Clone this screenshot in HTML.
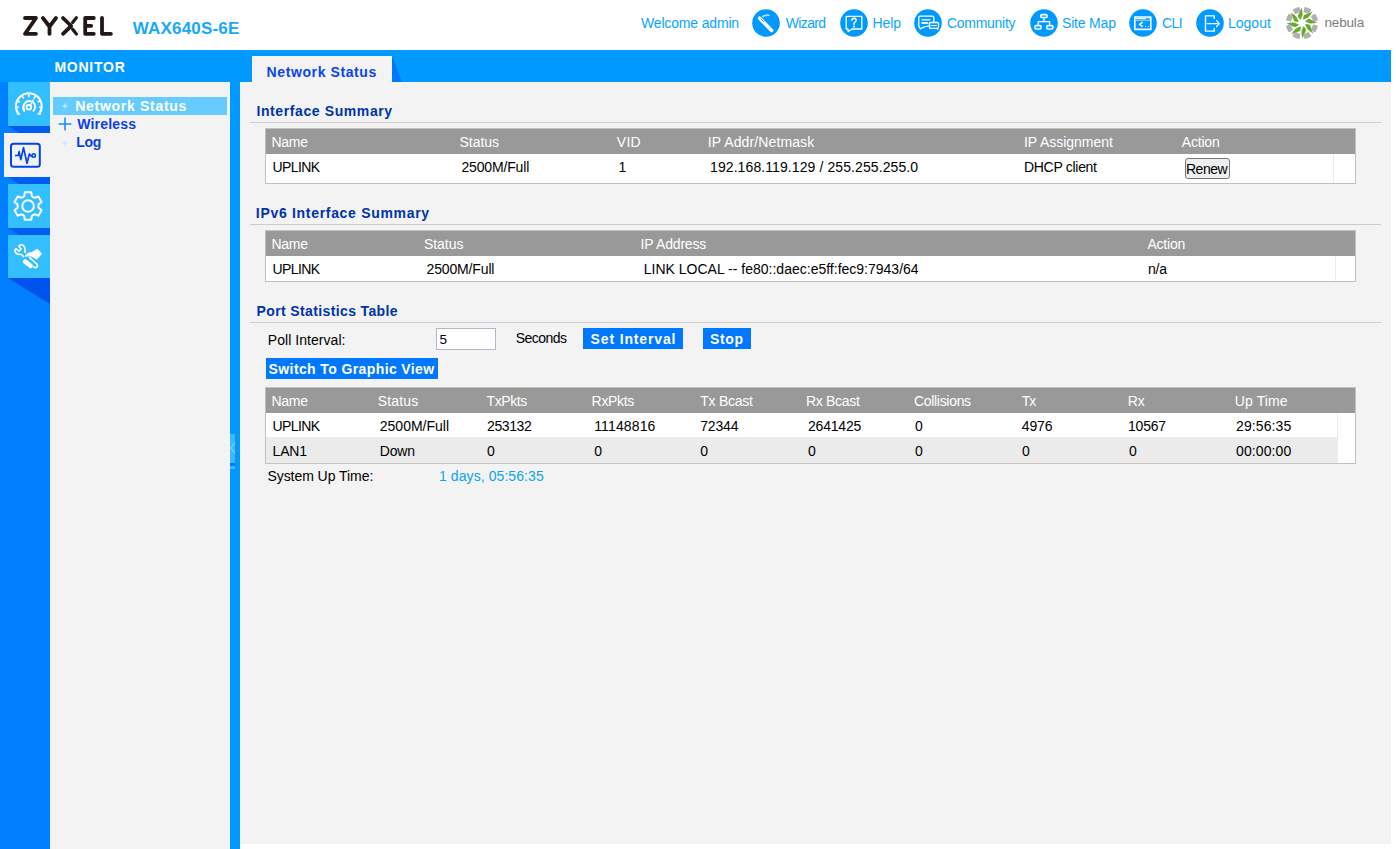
<!DOCTYPE html>
<html><head><meta charset="utf-8"><style>
html,body{margin:0;padding:0;}
body{width:1396px;height:849px;overflow:hidden;position:relative;background:#fff;font-family:"Liberation Sans", sans-serif;}
</style></head><body>
<svg style="position:absolute;left:20px;top:12px" width="96" height="28" viewBox="20 12 96 28" fill="none" stroke="#231815" stroke-width="3.8" stroke-linecap="round" stroke-linejoin="round">
<path d="M25,18 H36 L25,33.8 H36"/>
<path d="M42.9,18 L49.5,26.5 L56,18 M49.5,26.5 V33.8"/>
<path d="M63,18 L71.2,26 L63,33.8"/>
<path d="M76.4,17.8 L72.6,22.6 M72.6,29.2 L76.4,34" stroke-width="3.2"/>
<path d="M93.8,18 H85.2 V33.8 H93.8 M85.2,25.8 H91.2"/>
<path d="M102,18 V33.8 H110.9"/>
</svg>
<div id="t0" style="position:absolute;left:132.80px;top:18.51px;line-height:20px;font-size:17px;font-weight:700;color:#17a8f8;letter-spacing:0.178px;white-space:pre;">WAX640S-6E</div>
<div id="t1" style="position:absolute;left:641.00px;top:13.05px;line-height:20px;font-size:14px;font-weight:400;color:#0aa5fb;letter-spacing:-0.167px;white-space:pre;">Welcome admin</div>
<div id="t2" style="position:absolute;left:785.80px;top:13.05px;line-height:20px;font-size:14px;font-weight:400;color:#0aa5fb;letter-spacing:-0.660px;white-space:pre;">Wizard</div>
<div id="t3" style="position:absolute;left:872.40px;top:13.05px;line-height:20px;font-size:14px;font-weight:400;color:#0aa5fb;letter-spacing:-0.067px;white-space:pre;">Help</div>
<div id="t4" style="position:absolute;left:947.00px;top:13.05px;line-height:20px;font-size:14px;font-weight:400;color:#0aa5fb;letter-spacing:-0.287px;white-space:pre;">Community</div>
<div id="t5" style="position:absolute;left:1062.00px;top:13.05px;line-height:20px;font-size:14px;font-weight:400;color:#0aa5fb;letter-spacing:-0.186px;white-space:pre;">Site Map</div>
<div id="t6" style="position:absolute;left:1162.00px;top:13.05px;line-height:20px;font-size:14px;font-weight:400;color:#0aa5fb;letter-spacing:-0.600px;white-space:pre;">CLI</div>
<div id="t7" style="position:absolute;left:1228.00px;top:13.05px;line-height:20px;font-size:14px;font-weight:400;color:#0aa5fb;letter-spacing:0.000px;white-space:pre;">Logout</div>
<div id="t8" style="position:absolute;left:1324.40px;top:12.82px;line-height:20px;font-size:13.5px;font-weight:400;color:#7d7d7d;letter-spacing:-0.140px;white-space:pre;">nebula</div>
<svg style="position:absolute;left:751.6px;top:8.8px" width="28" height="28" viewBox="-14 -14 28 28"><circle cx="0" cy="0" r="13.8" fill="#0099ff"/><g fill="none" stroke="#fff" stroke-width="1.3" stroke-linecap="round" stroke-linejoin="round"><path d="M-6.4,-4.8 L5.6,7.4" stroke-width="3.6"/><path d="M-5.2,-4.2 L-2.6,-1.6" stroke="#0099ff" stroke-width="1"/><path d="M-3.3,-6.5 Q-1,-8.8 3.2,-7.7" stroke-width="1.1"/><path d="M-2.6,-5.6 Q-0.8,-7.4 1.6,-7.3" stroke-width="0.6" stroke-opacity="0.6"/></g></svg>
<svg style="position:absolute;left:840px;top:8.8px" width="28" height="28" viewBox="-14 -14 28 28"><circle cx="0" cy="0" r="13.8" fill="#0099ff"/><g fill="none" stroke="#fff" stroke-width="1.3" stroke-linecap="round" stroke-linejoin="round"><path d="M-7.8,-6.6 H7.8 V6 H-2 L-5.8,8.6 L-6,6 H-7.8 Z"/><path d="M-2.2,-2.6 Q-2,-4.8 0,-4.8 Q2.2,-4.8 2.2,-2.8 Q2.2,-1.4 0.6,-0.6 Q0,-0.2 0,1.4" stroke-width="1.4"/><circle cx="0" cy="3.6" r="0.5" fill="#fff" stroke-width="1.2"/></g></svg>
<svg style="position:absolute;left:914px;top:8.8px" width="28" height="28" viewBox="-14 -14 28 28"><circle cx="0" cy="0" r="13.8" fill="#0099ff"/><g fill="none" stroke="#fff" stroke-width="1.3" stroke-linecap="round" stroke-linejoin="round"><path d="M1.4,3.2 Q-2.5,2.8 -5.2,4.6 L-7.6,6 L-8.2,4.6 Q-9.2,4 -9.2,3 V-5.6 Q-9.2,-6.8 -8,-6.8 H4.6 Q5.8,-6.8 5.8,-5.6 V-0.6" stroke-width="1.3"/><path d="M-6,-3.2 H1.8" stroke-width="1.3"/><path d="M-6,0 H-0.4" stroke-width="1.8" stroke-opacity="0.85"/><rect x="1.5" y="-0.5" width="9" height="5.8" rx="1.1" stroke-width="1.3"/><path d="M9,5.3 L9.8,6.3" stroke-width="1.1"/><path d="M3.2,2.6 H8.4" stroke-width="1" stroke-dasharray="1.4 0.5"/></g></svg>
<svg style="position:absolute;left:1030px;top:8.8px" width="28" height="28" viewBox="-14 -14 28 28"><circle cx="0" cy="0" r="13.8" fill="#0099ff"/><g fill="none" stroke="#fff" stroke-width="1.3" stroke-linecap="round" stroke-linejoin="round"><g stroke-width="1.6"><rect x="-3.2" y="-8.4" width="6.2" height="2.9" rx="1"/><rect x="-9" y="2.6" width="6" height="3.4" rx="1"/><rect x="2.8" y="2.6" width="6" height="3.4" rx="1"/></g><path d="M-0.1,-4.8 V-1.4 M-5.8,1.8 V-1.4 H5.6 V1.8" stroke-width="1.3"/></g></svg>
<svg style="position:absolute;left:1129px;top:8.8px" width="28" height="28" viewBox="-14 -14 28 28"><circle cx="0" cy="0" r="13.8" fill="#0099ff"/><g fill="none" stroke="#fff" stroke-width="1.3" stroke-linecap="round" stroke-linejoin="round"><rect x="-8.2" y="-6" width="16" height="12.4" stroke-width="1.6"/><path d="M-6.6,-4.4 H2.8" stroke-width="1.2"/><path d="M5.2,-4.4 H6.4" stroke-width="1.2" stroke-opacity="0.6"/><path d="M-6.6,-2.6 H6.6" stroke-width="0.8" stroke-opacity="0.7"/><path d="M-0.6,-0.6 L-3.6,1.4 L-0.6,3.4" stroke-width="1.3"/><circle cx="2.6" cy="3.4" r="0.6" fill="#fff" stroke="none"/><circle cx="5.4" cy="3.4" r="0.6" fill="#fff" stroke="none"/></g></svg>
<svg style="position:absolute;left:1196px;top:8.8px" width="28" height="28" viewBox="-14 -14 28 28"><circle cx="0" cy="0" r="13.8" fill="#0099ff"/><g fill="none" stroke="#fff" stroke-width="1.3" stroke-linecap="round" stroke-linejoin="round"><path d="M4.3,-4.6 V-7.1 H-4.5 V8.1 H4.3 V5.4" stroke-width="1.4"/><path d="M-2.6,0.6 H9.4 M6.6,-2.3 L9.5,0.6 L6.6,3.5" stroke-width="1.2"/></g></svg>
<svg style="position:absolute;left:1285px;top:5.800000000000001px" width="34" height="34" viewBox="-17 -17 34 34"><g><g transform="rotate(0)"><path d="M-1.5,-3.0 Q-4.0,-5.6 -4.2,-7.0 L-0.45,-15.4 Q0.8,-11 0.5,-7.8 Z" fill="#68ab2a"/></g><g transform="rotate(45)"><path d="M-1.5,-3.0 Q-4.0,-5.6 -4.2,-7.0 L-0.45,-15.4 Q0.8,-11 0.5,-7.8 Z" fill="#68ab2a"/></g><g transform="rotate(90)"><path d="M-1.5,-3.0 Q-4.0,-5.6 -4.2,-7.0 L-0.45,-15.4 Q0.8,-11 0.5,-7.8 Z" fill="#68ab2a"/></g><g transform="rotate(135)"><path d="M-1.5,-3.0 Q-4.0,-5.6 -4.2,-7.0 L-0.45,-15.4 Q0.8,-11 0.5,-7.8 Z" fill="#68ab2a"/></g><g transform="rotate(180)"><path d="M-1.5,-3.0 Q-4.0,-5.6 -4.2,-7.0 L-0.45,-15.4 Q0.8,-11 0.5,-7.8 Z" fill="#68ab2a"/></g><g transform="rotate(225)"><path d="M-1.5,-3.0 Q-4.0,-5.6 -4.2,-7.0 L-0.45,-15.4 Q0.8,-11 0.5,-7.8 Z" fill="#68ab2a"/></g><g transform="rotate(270)"><path d="M-1.5,-3.0 Q-4.0,-5.6 -4.2,-7.0 L-0.45,-15.4 Q0.8,-11 0.5,-7.8 Z" fill="#68ab2a"/></g><g transform="rotate(315)"><path d="M-1.5,-3.0 Q-4.0,-5.6 -4.2,-7.0 L-0.45,-15.4 Q0.8,-11 0.5,-7.8 Z" fill="#68ab2a"/></g><path d="M2.21,-11.39 L2.98,-15.31 A15.6,15.6 0 0 1 8.72,-12.93 L6.49,-9.62 A11.6,11.6 0 0 0 2.21,-11.39 Z" fill="#b0b0b2" stroke="#b0b0b2" stroke-width="1.2" stroke-linejoin="round"/><path d="M9.62,-6.49 L12.93,-8.72 A15.6,15.6 0 0 1 15.31,-2.98 L11.39,-2.21 A11.6,11.6 0 0 0 9.62,-6.49 Z" fill="#b0b0b2" stroke="#b0b0b2" stroke-width="1.2" stroke-linejoin="round"/><path d="M11.39,2.21 L15.31,2.98 A15.6,15.6 0 0 1 12.93,8.72 L9.62,6.49 A11.6,11.6 0 0 0 11.39,2.21 Z" fill="#b0b0b2" stroke="#b0b0b2" stroke-width="1.2" stroke-linejoin="round"/><path d="M6.49,9.62 L8.72,12.93 A15.6,15.6 0 0 1 2.98,15.31 L2.21,11.39 A11.6,11.6 0 0 0 6.49,9.62 Z" fill="#b0b0b2" stroke="#b0b0b2" stroke-width="1.2" stroke-linejoin="round"/><path d="M-2.21,11.39 L-2.98,15.31 A15.6,15.6 0 0 1 -8.72,12.93 L-6.49,9.62 A11.6,11.6 0 0 0 -2.21,11.39 Z" fill="#b0b0b2" stroke="#b0b0b2" stroke-width="1.2" stroke-linejoin="round"/><path d="M-9.62,6.49 L-12.93,8.72 A15.6,15.6 0 0 1 -15.31,2.98 L-11.39,2.21 A11.6,11.6 0 0 0 -9.62,6.49 Z" fill="#b0b0b2" stroke="#b0b0b2" stroke-width="1.2" stroke-linejoin="round"/><path d="M-11.39,-2.21 L-15.31,-2.98 A15.6,15.6 0 0 1 -12.93,-8.72 L-9.62,-6.49 A11.6,11.6 0 0 0 -11.39,-2.21 Z" fill="#b0b0b2" stroke="#b0b0b2" stroke-width="1.2" stroke-linejoin="round"/><path d="M-6.49,-9.62 L-8.72,-12.93 A15.6,15.6 0 0 1 -2.98,-15.31 L-2.21,-11.39 A11.6,11.6 0 0 0 -6.49,-9.62 Z" fill="#b0b0b2" stroke="#b0b0b2" stroke-width="1.2" stroke-linejoin="round"/></g></svg>
<div style="position:absolute;left:0px;top:50px;width:1391px;height:32px;background:#0099ff;"></div>
<div id="t9" style="position:absolute;left:54.40px;top:57.15px;line-height:20px;font-size:14px;font-weight:700;color:#fff;letter-spacing:0.767px;white-space:pre;">MONITOR</div>
<div style="position:absolute;left:252px;top:56px;width:140px;height:26px;background:#f3f3f3;"></div>
<svg style="position:absolute;left:392px;top:56px" width="10" height="26"><path d="M0,0 L10,26 L0,26 Z" fill="#0077ff"/></svg>
<div id="t10" style="position:absolute;left:266.60px;top:61.95px;line-height:20px;font-size:14px;font-weight:700;color:#0a45ee;letter-spacing:0.600px;white-space:pre;">Network Status</div>
<div style="position:absolute;left:0px;top:82px;width:50px;height:767px;background:#0080ff;"></div>
<div style="position:absolute;left:8px;top:82px;width:42px;height:44px;background:#33bfff;"></div>
<svg style="position:absolute;left:8px;top:126px" width="42" height="7"><path d="M0,0 H42 V7 H11 Z" fill="#005cf0"/></svg>
<div style="position:absolute;left:4px;top:133px;width:46px;height:44px;background:#f3f3f3;"></div>
<svg style="position:absolute;left:8px;top:177px" width="42" height="7"><path d="M0,0 H42 V7 H11 Z" fill="#005cf0"/></svg>
<div style="position:absolute;left:8px;top:184px;width:42px;height:44px;background:#33bfff;"></div>
<svg style="position:absolute;left:8px;top:228px" width="42" height="7"><path d="M0,0 H42 V7 H11 Z" fill="#005cf0"/></svg>
<div style="position:absolute;left:8px;top:235px;width:42px;height:43px;background:#33bfff;"></div>
<svg style="position:absolute;left:8px;top:278px" width="42" height="26"><path d="M0,0 H42 V26 Z" fill="#0052ee"/></svg>
<svg style="position:absolute;left:8px;top:86px" width="42" height="36" viewBox="8 86 42 36" fill="none" stroke="#fff" stroke-linecap="round" stroke-width="2">
<path d="M18.3,113.6 A12.9,12.9 0 1 1 39.4,113.6"/><path d="M17.6,113.9 H19.4 M40.1,113.9 H38.3" stroke-width="1.8"/>
<path d="M28.85,95 V96.6 M22.6,96.7 L23.4,98 M35.1,96.7 L34.3,98 M18,101 L19.4,101.8 M39.7,101 L38.3,101.8 M16.4,107.2 H18 M41.3,107.2 H39.7" stroke-width="1.6"/>
<path d="M24.2,110.8 A6.4,6.4 0 0 1 30.5,101.1 M33.5,102.6 A6.4,6.4 0 0 1 33.5,110.8" stroke-width="2"/>
<circle cx="28.85" cy="107.3" r="2.3" stroke-width="1.9"/>
<path d="M30.2,105.2 L33.2,100" stroke-width="1.5"/>
</svg>
<svg style="position:absolute;left:6px;top:138px" width="40" height="34" viewBox="6 138 40 34" fill="none" stroke="#0044ee" stroke-linecap="round" stroke-linejoin="round">
<rect x="11" y="143.8" width="28.8" height="23" rx="2.6" stroke-width="2"/>
<path d="M15.6,155.5 H18.3 L19.1,151.6 L20.8,159.6 L23.5,147.6 L27,163.2 L29.4,153.9 L31.2,156.2" stroke-width="1.7"/>
<circle cx="33.7" cy="155.5" r="1.7" stroke-width="1.6"/>
</svg>
<svg style="position:absolute;left:8px;top:186px" width="40" height="40" viewBox="8 186 40 40" fill="none" stroke="#fff" stroke-width="2" stroke-linejoin="round">
<path d="M22.90,197.13 L24.25,196.15 L24.88,192.31 L31.22,192.31 L31.85,196.15 L33.20,197.13 L34.72,197.81 L38.36,196.43 L41.53,201.93 L38.52,204.39 L38.35,206.05 L38.52,207.71 L41.53,210.17 L38.36,215.67 L34.72,214.29 L33.20,214.97 L31.85,215.95 L31.22,219.79 L24.88,219.79 L24.25,215.95 L22.90,214.97 L21.38,214.29 L17.74,215.67 L14.57,210.17 L17.58,207.71 L17.75,206.05 L17.58,204.39 L14.57,201.93 L17.74,196.43 L21.38,197.81 Z"/>
<circle cx="28.05" cy="206.05" r="5.8"/>
</svg>
<svg style="position:absolute;left:8px;top:237px" width="40" height="40" viewBox="8 237 40 40" fill="none" stroke="#fff" stroke-linecap="round" stroke-linejoin="round">
<path d="M25,252.4 Q25.4,246 22.4,245 Q19.8,244.2 18.8,246.3 L21.1,249 L18.9,251.1 L15.9,248.6 Q14.3,250.2 15.3,252.2 Q17,254.8 21.6,254.4 L23.4,256.6" stroke-width="1.6"/>
<path d="M25.6,255.4 Q26.6,252.8 31.6,252.6 L37.4,249.2 L41.6,253.7 L36.8,259.1 L31.8,256.2 Q28.5,255.2 25.6,256.2 Z" fill="#fff" stroke-width="1"/>
<path d="M25.2,261.6 L30.6,265.8" stroke-width="4.6"/>
<path d="M27.6,259.6 L31.6,262.8 M26,261.6 L30,264.8" stroke="#33bfff" stroke-width="0" />
<path d="M29.4,257.4 L37,264.2 Q38.2,266.6 36,267.6 Q34.6,268 33.8,266.8" stroke-width="1.6"/>
</svg>
<div style="position:absolute;left:50px;top:82px;width:180px;height:767px;background:#f3f3f3;"></div>
<div style="position:absolute;left:53px;top:97px;width:174px;height:18px;background:#66ccff;"></div>
<div id="t11" style="position:absolute;left:75.20px;top:95.95px;line-height:20px;font-size:14px;font-weight:700;color:#fff;letter-spacing:0.715px;white-space:pre;">Network Status</div>
<svg style="position:absolute;left:60px;top:101.3px" width="10" height="10"><path d="M2.6,5 H7.4 M5,2.6 V7.4" stroke="#d8f2ff" stroke-width="1"/></svg>
<svg style="position:absolute;left:57px;top:116px" width="16" height="16"><path d="M1.6,8 H14.4 M8,1.6 V14.4" stroke="#1a8cff" stroke-width="1.6"/></svg>
<div id="t12" style="position:absolute;left:77.20px;top:113.95px;line-height:20px;font-size:14px;font-weight:700;color:#0a3fe6;letter-spacing:0.200px;white-space:pre;">Wireless</div>
<svg style="position:absolute;left:60px;top:137.5px" width="10" height="10"><path d="M2.6,5 H7.4 M5,2.6 V7.4" stroke="#c8e0ff" stroke-width="1"/></svg>
<div id="t13" style="position:absolute;left:76.20px;top:131.75px;line-height:20px;font-size:14px;font-weight:700;color:#0a3fe6;letter-spacing:-0.300px;white-space:pre;">Log</div>
<div style="position:absolute;left:230px;top:82px;width:10px;height:767px;background:#0099ff;"></div>
<div style="position:absolute;left:230px;top:434px;width:5px;height:29px;background:#3db8ff;"></div>
<div style="position:absolute;left:230px;top:463px;width:5px;height:3px;background:#0077ff;"></div>
<div style="position:absolute;left:230px;top:466px;width:5px;height:3px;background:#3db8ff;"></div>
<svg style="position:absolute;left:230px;top:441px" width="6" height="14"><path d="M5,1.8 L0.6,7 L5,12.2" fill="none" stroke="#a8dcff" stroke-width="0.9"/></svg>
<div style="position:absolute;left:240px;top:82px;width:1151px;height:762px;background:#f3f3f3;"></div>
<div id="t14" style="position:absolute;left:256.40px;top:101.05px;line-height:20px;font-size:14px;font-weight:700;color:#0033aa;letter-spacing:0.606px;white-space:pre;">Interface Summary</div>
<div style="position:absolute;left:250px;top:122px;width:1131px;height:1px;background:#cccccc;"></div>
<div id="t15" style="position:absolute;left:255.80px;top:203.35px;line-height:20px;font-size:14px;font-weight:700;color:#0033aa;letter-spacing:0.695px;white-space:pre;">IPv6 Interface Summary</div>
<div style="position:absolute;left:250px;top:224px;width:1131px;height:1px;background:#cccccc;"></div>
<div id="t16" style="position:absolute;left:256.60px;top:301.25px;line-height:20px;font-size:14px;font-weight:700;color:#0033aa;letter-spacing:0.370px;white-space:pre;">Port Statistics Table</div>
<div style="position:absolute;left:250px;top:322px;width:1131px;height:1px;background:#cccccc;"></div>
<div style="position:absolute;left:265px;top:128px;width:1089px;height:54px;border:1px solid #c4c2b8;background:#fff"></div>
<div style="position:absolute;left:266px;top:129px;width:1089px;height:25px;background:#999999;"></div>
<div style="position:absolute;left:1333px;top:154px;width:1px;height:29px;background:#ececec;"></div>
<div id="t17" style="position:absolute;left:271.40px;top:132.45px;line-height:20px;font-size:14px;font-weight:400;color:#fff;letter-spacing:-0.267px;white-space:pre;">Name</div>
<div id="t18" style="position:absolute;left:459.60px;top:132.45px;line-height:20px;font-size:14px;font-weight:400;color:#fff;letter-spacing:-0.060px;white-space:pre;">Status</div>
<div id="t19" style="position:absolute;left:616.80px;top:132.45px;line-height:20px;font-size:14px;font-weight:400;color:#fff;letter-spacing:0.250px;white-space:pre;">VID</div>
<div id="t20" style="position:absolute;left:707.80px;top:132.45px;line-height:20px;font-size:14px;font-weight:400;color:#fff;letter-spacing:0.114px;white-space:pre;">IP Addr/Netmask</div>
<div id="t21" style="position:absolute;left:1024.00px;top:132.45px;line-height:20px;font-size:14px;font-weight:400;color:#fff;letter-spacing:-0.033px;white-space:pre;">IP Assignment</div>
<div id="t22" style="position:absolute;left:1181.80px;top:132.45px;line-height:20px;font-size:14px;font-weight:400;color:#fff;letter-spacing:-0.200px;white-space:pre;">Action</div>
<div id="t23" style="position:absolute;left:272.60px;top:157.15px;line-height:20px;font-size:14px;font-weight:400;color:#000;letter-spacing:-0.640px;white-space:pre;">UPLINK</div>
<div id="t24" style="position:absolute;left:461.40px;top:157.15px;line-height:20px;font-size:14px;font-weight:400;color:#000;letter-spacing:-0.156px;white-space:pre;">2500M/Full</div>
<div id="t25" style="position:absolute;left:618.60px;top:157.15px;line-height:20px;font-size:14px;font-weight:400;color:#000;letter-spacing:-0.200px;white-space:pre;">1</div>
<div id="t26" style="position:absolute;left:710.00px;top:157.15px;line-height:20px;font-size:14px;font-weight:400;color:#000;letter-spacing:0.093px;white-space:pre;">192.168.119.129 / 255.255.255.0</div>
<div id="t27" style="position:absolute;left:1024.00px;top:157.15px;line-height:20px;font-size:14px;font-weight:400;color:#000;letter-spacing:-0.300px;white-space:pre;">DHCP client</div>
<div style="position:absolute;left:1185px;top:158px;width:43px;height:19px;border:1px solid #767676;border-radius:3px;background:#efefef"></div>
<div id="t28" style="position:absolute;left:1186.00px;top:159.25px;line-height:20px;font-size:14px;font-weight:400;color:#000;letter-spacing:-0.500px;white-space:pre;">Renew</div>
<div style="position:absolute;left:265px;top:230px;width:1089px;height:50px;border:1px solid #c4c2b8;background:#fff"></div>
<div style="position:absolute;left:266px;top:231px;width:1089px;height:25px;background:#999999;"></div>
<div style="position:absolute;left:1335px;top:256px;width:1px;height:25px;background:#ececec;"></div>
<div id="t29" style="position:absolute;left:271.40px;top:234.35px;line-height:20px;font-size:14px;font-weight:400;color:#fff;letter-spacing:-0.267px;white-space:pre;">Name</div>
<div id="t30" style="position:absolute;left:424.00px;top:234.35px;line-height:20px;font-size:14px;font-weight:400;color:#fff;letter-spacing:-0.060px;white-space:pre;">Status</div>
<div id="t31" style="position:absolute;left:640.60px;top:234.35px;line-height:20px;font-size:14px;font-weight:400;color:#fff;letter-spacing:-0.200px;white-space:pre;">IP Address</div>
<div id="t32" style="position:absolute;left:1147.40px;top:234.35px;line-height:20px;font-size:14px;font-weight:400;color:#fff;letter-spacing:-0.200px;white-space:pre;">Action</div>
<div id="t33" style="position:absolute;left:272.60px;top:259.15px;line-height:20px;font-size:14px;font-weight:400;color:#000;letter-spacing:-0.640px;white-space:pre;">UPLINK</div>
<div id="t34" style="position:absolute;left:426.60px;top:259.15px;line-height:20px;font-size:14px;font-weight:400;color:#000;letter-spacing:-0.156px;white-space:pre;">2500M/Full</div>
<div id="t35" style="position:absolute;left:643.80px;top:259.15px;line-height:20px;font-size:14px;font-weight:400;color:#000;letter-spacing:0.002px;white-space:pre;">LINK LOCAL -- fe80::daec:e5ff:fec9:7943/64</div>
<div id="t36" style="position:absolute;left:1148.00px;top:259.15px;line-height:20px;font-size:14px;font-weight:400;color:#000;letter-spacing:-0.200px;white-space:pre;">n/a</div>
<div id="t37" style="position:absolute;left:267.80px;top:330.25px;line-height:20px;font-size:14px;font-weight:400;color:#000;letter-spacing:0.046px;white-space:pre;">Poll Interval:</div>
<div style="position:absolute;left:436px;top:328px;width:58px;height:20px;border:1px solid #b5b5c8;background:#fff"></div>
<div id="t38" style="position:absolute;left:439.40px;top:330.12px;line-height:20px;font-size:13.5px;font-weight:400;color:#000;letter-spacing:0.000px;white-space:pre;">5</div>
<div id="t39" style="position:absolute;left:515.80px;top:327.85px;line-height:20px;font-size:14px;font-weight:400;color:#000;letter-spacing:-0.567px;white-space:pre;">Seconds</div>
<div style="position:absolute;left:583px;top:328px;width:100px;height:21px;background:#0077ff;"></div>
<div id="t40" style="position:absolute;left:590.60px;top:328.95px;line-height:20px;font-size:14px;font-weight:700;color:#fff;letter-spacing:0.855px;white-space:pre;">Set Interval</div>
<div style="position:absolute;left:703px;top:328px;width:48px;height:21px;background:#0077ff;"></div>
<div id="t41" style="position:absolute;left:710.00px;top:328.95px;line-height:20px;font-size:14px;font-weight:700;color:#fff;letter-spacing:0.667px;white-space:pre;">Stop</div>
<div style="position:absolute;left:266px;top:358px;width:172px;height:21px;background:#0077ff;"></div>
<div id="t42" style="position:absolute;left:268.60px;top:358.95px;line-height:20px;font-size:14px;font-weight:700;color:#fff;letter-spacing:0.390px;white-space:pre;">Switch To Graphic View</div>
<div style="position:absolute;left:265px;top:387px;width:1089px;height:75px;border:1px solid #c4c2b8;background:#fff"></div>
<div style="position:absolute;left:266px;top:388px;width:1089px;height:25px;background:#999999;"></div>
<div style="position:absolute;left:266px;top:437px;width:1071px;height:26px;background:#ebebeb;"></div>
<div style="position:absolute;left:1337px;top:413px;width:1px;height:50px;background:#ececec;"></div>
<div id="t43" style="position:absolute;left:271.40px;top:391.45px;line-height:20px;font-size:14px;font-weight:400;color:#fff;letter-spacing:-0.267px;white-space:pre;">Name</div>
<div id="t44" style="position:absolute;left:377.80px;top:391.45px;line-height:20px;font-size:14px;font-weight:400;color:#fff;letter-spacing:0.140px;white-space:pre;">Status</div>
<div id="t45" style="position:absolute;left:486.60px;top:391.45px;line-height:20px;font-size:14px;font-weight:400;color:#fff;letter-spacing:-0.420px;white-space:pre;">TxPkts</div>
<div id="t46" style="position:absolute;left:591.60px;top:391.45px;line-height:20px;font-size:14px;font-weight:400;color:#fff;letter-spacing:-0.320px;white-space:pre;">RxPkts</div>
<div id="t47" style="position:absolute;left:700.20px;top:391.45px;line-height:20px;font-size:14px;font-weight:400;color:#fff;letter-spacing:-0.243px;white-space:pre;">Tx Bcast</div>
<div id="t48" style="position:absolute;left:806.00px;top:391.45px;line-height:20px;font-size:14px;font-weight:400;color:#fff;letter-spacing:-0.314px;white-space:pre;">Rx Bcast</div>
<div id="t49" style="position:absolute;left:914.00px;top:391.45px;line-height:20px;font-size:14px;font-weight:400;color:#fff;letter-spacing:-0.311px;white-space:pre;">Collisions</div>
<div id="t50" style="position:absolute;left:1021.80px;top:391.45px;line-height:20px;font-size:14px;font-weight:400;color:#fff;letter-spacing:-1.000px;white-space:pre;">Tx</div>
<div id="t51" style="position:absolute;left:1127.80px;top:391.45px;line-height:20px;font-size:14px;font-weight:400;color:#fff;letter-spacing:-0.200px;white-space:pre;">Rx</div>
<div id="t52" style="position:absolute;left:1234.80px;top:391.45px;line-height:20px;font-size:14px;font-weight:400;color:#fff;letter-spacing:0.100px;white-space:pre;">Up Time</div>
<div id="t53" style="position:absolute;left:272.60px;top:416.35px;line-height:20px;font-size:14px;font-weight:400;color:#000;letter-spacing:-0.640px;white-space:pre;">UPLINK</div>
<div id="t54" style="position:absolute;left:379.80px;top:416.35px;line-height:20px;font-size:14px;font-weight:400;color:#000;letter-spacing:-0.000px;white-space:pre;">2500M/Full</div>
<div id="t55" style="position:absolute;left:487.00px;top:416.35px;line-height:20px;font-size:14px;font-weight:400;color:#000;letter-spacing:-0.380px;white-space:pre;">253132</div>
<div id="t56" style="position:absolute;left:594.20px;top:416.35px;line-height:20px;font-size:14px;font-weight:400;color:#000;letter-spacing:0.143px;white-space:pre;">11148816</div>
<div id="t57" style="position:absolute;left:700.20px;top:416.35px;line-height:20px;font-size:14px;font-weight:400;color:#000;letter-spacing:-0.175px;white-space:pre;">72344</div>
<div id="t58" style="position:absolute;left:808.00px;top:416.35px;line-height:20px;font-size:14px;font-weight:400;color:#000;letter-spacing:-0.200px;white-space:pre;">2641425</div>
<div id="t59" style="position:absolute;left:915.00px;top:416.35px;line-height:20px;font-size:14px;font-weight:400;color:#000;letter-spacing:-0.200px;white-space:pre;">0</div>
<div id="t60" style="position:absolute;left:1021.80px;top:416.35px;line-height:20px;font-size:14px;font-weight:400;color:#000;letter-spacing:-0.167px;white-space:pre;">4976</div>
<div id="t61" style="position:absolute;left:1128.00px;top:416.35px;line-height:20px;font-size:14px;font-weight:400;color:#000;letter-spacing:-0.200px;white-space:pre;">10567</div>
<div id="t62" style="position:absolute;left:1236.00px;top:416.35px;line-height:20px;font-size:14px;font-weight:400;color:#000;letter-spacing:0.114px;white-space:pre;">29:56:35</div>
<div id="t63" style="position:absolute;left:272.60px;top:441.35px;line-height:20px;font-size:14px;font-weight:400;color:#000;letter-spacing:-0.200px;white-space:pre;">LAN1</div>
<div id="t64" style="position:absolute;left:379.80px;top:441.35px;line-height:20px;font-size:14px;font-weight:400;color:#000;letter-spacing:-0.200px;white-space:pre;">Down</div>
<div id="t65" style="position:absolute;left:487.00px;top:441.35px;line-height:20px;font-size:14px;font-weight:400;color:#000;letter-spacing:-0.200px;white-space:pre;">0</div>
<div id="t66" style="position:absolute;left:594.20px;top:441.35px;line-height:20px;font-size:14px;font-weight:400;color:#000;letter-spacing:-0.200px;white-space:pre;">0</div>
<div id="t67" style="position:absolute;left:700.20px;top:441.35px;line-height:20px;font-size:14px;font-weight:400;color:#000;letter-spacing:-0.200px;white-space:pre;">0</div>
<div id="t68" style="position:absolute;left:808.00px;top:441.35px;line-height:20px;font-size:14px;font-weight:400;color:#000;letter-spacing:-0.200px;white-space:pre;">0</div>
<div id="t69" style="position:absolute;left:915.00px;top:441.35px;line-height:20px;font-size:14px;font-weight:400;color:#000;letter-spacing:-0.200px;white-space:pre;">0</div>
<div id="t70" style="position:absolute;left:1022.00px;top:441.35px;line-height:20px;font-size:14px;font-weight:400;color:#000;letter-spacing:-0.200px;white-space:pre;">0</div>
<div id="t71" style="position:absolute;left:1129.00px;top:441.35px;line-height:20px;font-size:14px;font-weight:400;color:#000;letter-spacing:-0.200px;white-space:pre;">0</div>
<div id="t72" style="position:absolute;left:1236.00px;top:441.35px;line-height:20px;font-size:14px;font-weight:400;color:#000;letter-spacing:0.114px;white-space:pre;">00:00:00</div>
<div id="t73" style="position:absolute;left:267.40px;top:466.15px;line-height:20px;font-size:14px;font-weight:400;color:#000;letter-spacing:-0.050px;white-space:pre;">System Up Time:</div>
<div id="t74" style="position:absolute;left:439.00px;top:466.15px;line-height:20px;font-size:14px;font-weight:400;color:#0aa5f0;letter-spacing:0.080px;white-space:pre;">1 days, 05:56:35</div>
</body></html>
